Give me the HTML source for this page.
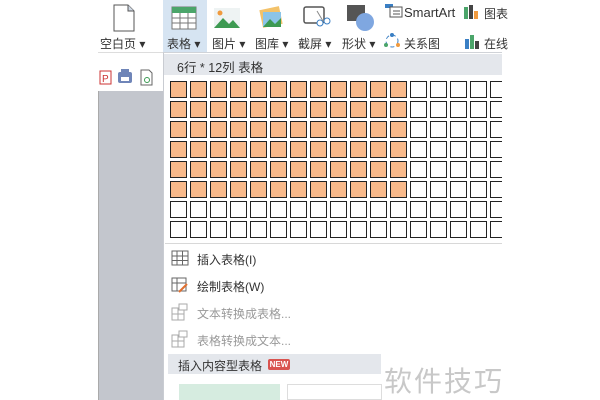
<!DOCTYPE html>
<html><head><meta charset="utf-8"><style>
*{margin:0;padding:0;box-sizing:border-box}
body{width:600px;height:400px;overflow:hidden;background:#fff;position:relative;font-family:"Liberation Sans","Noto Sans CJK SC",sans-serif;color:#333}
.a{position:absolute}
.t{font-size:12px;white-space:nowrap}
.cell{position:absolute;width:17px;height:17px;border:1.5px solid #222;background:#fff}
.o{background:#f8b98a}
</style></head><body>
<div class="a" style="left:98px;top:91px;width:65px;height:309px;background:#c3c6cd"></div>
<div class="a" style="left:98px;top:91px;width:1px;height:309px;background:#aaa"></div>
<!-- toolbar -->
<div class="a" style="left:163px;top:0;width:44px;height:52px;background:#d6e4f2"></div>
<svg class="a" style="left:112px;top:4px" width="24" height="28"><path d="M2 1h14l6 6v20H2z" fill="#fff" stroke="#555"/><path d="M16 1v6h6" fill="#cfd8e4" stroke="#555"/></svg>
<div class="a t" style="left:100px;top:35px">空白页 ▾</div>
<svg class="a" style="left:171px;top:6px" width="26" height="24"><rect x="1" y="1" width="24" height="22" fill="#fff" stroke="#777"/><rect x="1" y="1" width="24" height="6" fill="#4ba56a"/><path d="M1 12h24M1 17h24M9 7v16M17 7v16" stroke="#777"/></svg>
<div class="a t" style="left:167px;top:35px">表格 ▾</div>
<svg class="a" style="left:214px;top:8px" width="26" height="20"><rect width="26" height="20" fill="#eef3f3"/><circle cx="6" cy="5" r="2.5" fill="#f09a3e"/><path d="M0 20L9 10l6 6 4-4 7 8z" fill="#3d9a52"/></svg>
<div class="a t" style="left:212px;top:35px">图片 ▾</div>
<svg class="a" style="left:258px;top:5px" width="26" height="24"><rect x="3" y="3" width="20" height="18" fill="#f3c26a" transform="rotate(-12 13 12)"/><rect x="5" y="7" width="18" height="15" fill="#8cc4e8"/><path d="M5 22l7-8 5 5 6-6v9z" fill="#3d9a52"/></svg>
<div class="a t" style="left:255px;top:35px">图库 ▾</div>
<svg class="a" style="left:303px;top:5px" width="28" height="24"><rect x="1" y="2" width="20" height="16" rx="2" fill="none" stroke="#555" stroke-width="1.5"/><circle cx="17" cy="18" r="3" fill="#fff" stroke="#3a7fc4"/><circle cx="24" cy="16" r="3" fill="#fff" stroke="#3a7fc4"/><path d="M14 6l6 10" stroke="#888"/></svg>
<div class="a t" style="left:298px;top:35px">截屏 ▾</div>
<svg class="a" style="left:347px;top:5px" width="28" height="26"><rect x="0" y="0" width="18" height="16" fill="#555"/><circle cx="18" cy="17" r="9" fill="#7fa7e0"/></svg>
<div class="a t" style="left:342px;top:35px">形状 ▾</div>
<svg class="a" style="left:385px;top:4px" width="18" height="14"><rect x="0" y="0" width="8" height="4" fill="#3a7fc4"/><rect x="5" y="3" width="12" height="10" fill="#fff" stroke="#555"/><path d="M8 7h7M8 10h7" stroke="#555"/></svg>
<div class="a t" style="left:404px;top:5px;font-size:13px">SmartArt</div>
<svg class="a" style="left:464px;top:5px" width="16" height="14"><rect x="0" y="2" width="4" height="12" fill="#4ba56a"/><rect x="5" y="0" width="4" height="14" fill="#444"/><rect x="10" y="6" width="4" height="8" fill="#f09a3e"/></svg>
<div class="a t" style="left:484px;top:5px">图表</div>
<svg class="a" style="left:384px;top:33px" width="16" height="16"><circle cx="8" cy="8" r="6" fill="none" stroke="#3a7fc4" stroke-dasharray="4 3"/><circle cx="8" cy="2" r="2" fill="#3a7fc4"/><circle cx="2" cy="12" r="2" fill="#4ba56a"/><circle cx="14" cy="12" r="2" fill="#f09a3e"/></svg>
<div class="a t" style="left:404px;top:35px">关系图</div>
<svg class="a" style="left:464px;top:33px" width="16" height="16"><rect x="1" y="6" width="4" height="10" fill="#3a7fc4"/><rect x="6" y="2" width="4" height="14" fill="#4ba56a"/><rect x="11" y="8" width="4" height="8" fill="#444"/></svg>
<div class="a t" style="left:484px;top:35px">在线</div>
<div class="a" style="left:98px;top:52px;width:65px;height:1px;background:#ddd"></div>
<svg class="a" style="left:99px;top:69px" width="60" height="18"><rect x="1" y="2" width="11" height="13" fill="#fff" stroke="#c33"/><text x="3" y="13" font-size="10" fill="#c33">P</text><rect x="19" y="3" width="14" height="11" rx="2" fill="#6f85b8"/><rect x="22" y="0" width="8" height="5" fill="#6f85b8"/><rect x="22" y="8" width="8" height="4" fill="#fff"/><path d="M42 1h8l3 3v12H42z" fill="#fff" stroke="#666"/><circle cx="48" cy="11" r="2.5" fill="none" stroke="#3a9a52"/></svg>
<!-- dropdown -->
<div class="a" style="left:163px;top:52px;width:339px;height:348px;background:#fff;border-left:1px solid #c9ccd2;border-top:1px solid #d0d3d8"></div>
<div class="a" style="left:164px;top:54px;width:338px;height:21px;background:#e4e7ec"></div>
<div class="a t" style="left:177px;top:57px;font-size:12.5px">6行 * 12列 表格</div>
<div id="g"></div>
<div class="a" style="left:165px;top:243px;width:337px;height:1px;background:#d8d8d8"></div>
<svg class="a" style="left:171px;top:250px" width="18" height="16"><rect x="1" y="1" width="16" height="14" fill="#fff" stroke="#666"/><path d="M1 6h16M1 10.5h16M6 1v14M11.5 1v14" stroke="#666"/></svg>
<div class="a t" style="left:197px;top:251px">插入表格(I)</div>
<svg class="a" style="left:171px;top:277px" width="18" height="16"><rect x="1" y="1" width="14" height="13" fill="#fff" stroke="#666"/><path d="M1 6h14M6 1v13" stroke="#666"/><path d="M8 15l8-8" stroke="#e07030" stroke-width="2"/></svg>
<div class="a t" style="left:197px;top:278px">绘制表格(W)</div>
<svg class="a" style="left:171px;top:303px" width="18" height="18"><rect x="1" y="5" width="12" height="12" fill="#fff" stroke="#aaa"/><path d="M1 11h12M7 5v12" stroke="#aaa"/><rect x="8" y="1" width="8" height="6" fill="#fff" stroke="#aaa"/></svg>
<div class="a t" style="left:197px;top:305px;color:#999">文本转换成表格...</div>
<svg class="a" style="left:171px;top:330px" width="18" height="18"><rect x="1" y="5" width="12" height="12" fill="#fff" stroke="#aaa"/><path d="M1 11h12M7 5v12" stroke="#aaa"/><rect x="8" y="1" width="8" height="6" fill="#fff" stroke="#aaa"/></svg>
<div class="a t" style="left:197px;top:332px;color:#999">表格转换成文本...</div>
<div class="a" style="left:168px;top:354px;width:213px;height:20px;background:#e4e7ec"></div>
<div class="a t" style="left:178px;top:357px">插入内容型表格</div>
<div class="a" style="left:268px;top:359px;width:22px;height:11px;background:#d9534f;border-radius:2px;color:#fff;font-size:8px;line-height:11px;text-align:center;font-weight:bold">NEW</div>
<div class="a" style="left:179px;top:384px;width:101px;height:16px;background:#d6ece0"></div>
<div class="a" style="left:287px;top:384px;width:95px;height:16px;border:1px solid #ddd"></div>
<div class="a" style="left:384px;top:360px;font-size:28px;color:#c8c8c8;letter-spacing:2px;white-space:nowrap">软件技巧</div>
<script>
var g=document.getElementById('g'),h='';
for(var r=0;r<8;r++)for(var c=0;c<17;c++){var x=170+c*20;var w=Math.min(17,502-x);h+='<div class="cell'+(r<6&&c<12?' o':'')+'" style="left:'+x+'px;top:'+(81+r*20)+'px;width:'+w+'px;'+(w<17?'border-right:none':'')+'"></div>';}
g.innerHTML=h;
</script>
</body></html>
